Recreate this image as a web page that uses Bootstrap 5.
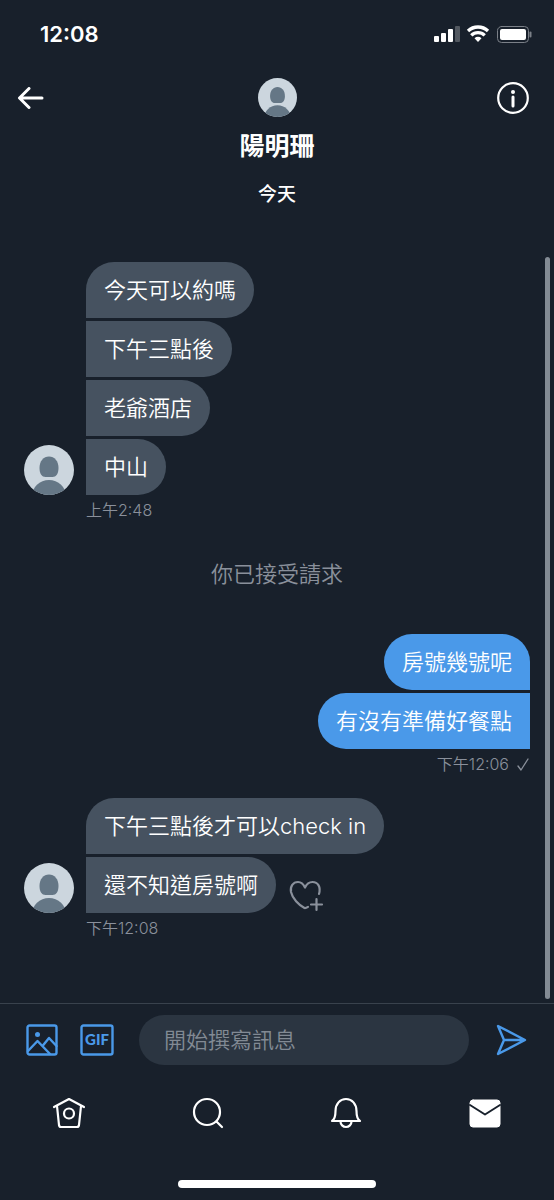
<!DOCTYPE html>
<html lang="zh-Hant">
<head>
<meta charset="utf-8">
<meta name="viewport" content="width=device-width, initial-scale=1">
<title>陽明珊</title>
<link href="https://cdn.jsdelivr.net/npm/bootstrap@5.3.0/dist/css/bootstrap.min.css" rel="stylesheet">
<style>
  :root { --ink: #18202b; --bubble: #465260; --brand: #4a99e9; --muted: #8a909b; --field: #2b3541; }
  body { background: var(--ink); color: #fff; font-family: Inter, "Noto Sans CJK TC", sans-serif; font-size: 22px; line-height: 32px; }
  svg { display: block; fill: none; stroke: currentColor; stroke-linecap: round; stroke-linejoin: round; }
  .icon-btn { background: none; border: 0; padding: 0; color: inherit; display: block; }
  .status { padding: 18px 22px 0 40px; font-weight: 600; }
  .top-grid { display: grid; grid-template-columns: 1fr auto 1fr; padding: 28px 17px 0; }
  .peer-name { font-size: 25px; font-weight: 700; line-height: 32px; margin-top: 13px; }
  .day { font-size: 19px; font-weight: 500; line-height: 28px; margin-top: 19px; }
  .thread { padding: 53px 24px 60px; font-weight: 350; }
  .msg-group { display: grid; grid-template-columns: 50px 1fr; column-gap: 12px; }
  .bubbles { display: flex; flex-direction: column; gap: 3px; align-items: flex-start; }
  .bubble { background: var(--bubble); padding: 12px 18px; border-radius: 0 28px 28px 0; }
  .bubble:first-child { border-top-left-radius: 28px; }
  .mine { align-items: flex-end; }
  .mine .bubble { background: var(--brand); border-radius: 28px 0 0 28px; }
  .mine .bubble:first-child { border-top-right-radius: 28px; }
  .stamp { color: var(--muted); font-size: 16px; line-height: 24px; margin-top: 3px; }
  .react { color: var(--muted); margin-left: 10px; }
  .note { color: var(--muted); margin: 36px 0 44px; }
  .after-mine { margin-top: 22px; }
  .scroll-thumb { position: absolute; right: 4px; top: 95px; bottom: 4px; width: 5px; border-radius: 3px; background: #838b94; }
  .composer { border-top: 1px solid #39424d; padding: 11px 27px 0 26px; color: var(--brand); }
  .composer .form-control { background: var(--field); border: 0; color: #fff; border-radius: 25px; height: 50px; padding: 0 25px; font-size: 22px; font-weight: 350; margin: 0 27px 0 25px; }
  .composer .form-control::placeholder { color: #828a94; opacity: 1; }
  .gif { margin-left: 22px; }
  .gif text { font: 900 15px Lato, sans-serif; }
  .tabs { padding-top: 32px; }
  .home-bar { width: 198px; height: 8px; border-radius: 4px; background: #fff; margin: 51px auto 12px; }
</style>
</head>
<body>
<svg width="0" height="0" class="position-absolute" aria-hidden="true">
  <symbol id="person" viewBox="0 0 50 50">
    <clipPath id="disc"><circle cx="25" cy="25" r="25"/></clipPath>
    <g clip-path="url(#disc)" stroke="none">
      <rect width="50" height="50" fill="#ccd6de"/>
      <path fill="#657786" d="M25 11.500c5.500 0 9.500 4.500 9.500 11.500 0 6-2.500 9-6 9h-7c-3.500 0-6-3-6-9 0-7 4-11.500 9.500-11.500z"/>
      <ellipse fill="#657786" cx="25" cy="51" rx="17" ry="16"/>
    </g>
  </symbol>
</svg>
<div class="d-flex flex-column min-vh-100">
  <header>
    <div class="status d-flex justify-content-between align-items-center">
      <span>12:08</span>
      <svg width="98" height="20" viewBox="0 0 98 20" aria-label="訊號、Wi-Fi、電池">
        <g fill="#fff" stroke="none">
          <rect x="0" y="12" width="5" height="6" rx="1"/><rect x="7" y="9" width="5" height="9" rx="1"/>
          <rect x="14" y="5" width="5" height="13" rx="1"/><rect x="21" y="2" width="5" height="16" rx="1" opacity=".25"/>
          <rect x="66" y="5" width="26" height="11" rx="2"/><path d="M40.500 14.200a5 5 0 0 1 7 0L44 18z"/>
        </g>
        <g stroke-width="3.300" stroke-linecap="butt"><path d="M34 7a14.500 14.500 0 0 1 20 0M37.300 11.300a9.500 9.500 0 0 1 13.400 0"/></g>
        <rect x="63.500" y="2.500" width="31" height="16" rx="4" stroke="#7b8088"/>
        <path d="M96.500 8.500v4" stroke="#7b8088" stroke-width="2"/>
      </svg>
    </div>
    <div class="top-grid align-items-center">
      <button class="icon-btn" aria-label="返回"><svg width="27" height="22" viewBox="0 0 27 22" stroke-width="3"><path d="M25 11H3M12 1.500 2.500 11 12 20.500"/></svg></button>
      <svg width="39" height="39"><use href="#person"/></svg>
      <button class="icon-btn ms-auto me-2" aria-label="資訊"><svg width="32" height="32" viewBox="0 0 32 32"><circle cx="16" cy="16" r="14.800" stroke-width="2.200"/><path d="M16 15v9" stroke-width="3"/><circle cx="16" cy="10" r="2" fill="#fff" stroke="none"/></svg></button>
    </div>
    <h1 class="peer-name text-center mb-0">陽明珊</h1>
  </header>
  <main class="position-relative flex-grow-1">
    <div class="day text-center">今天</div>
    <div class="thread">
      <section class="msg-group">
        <svg class="align-self-end" width="50" height="50"><use href="#person"/></svg>
        <div class="bubbles">
          <div class="bubble">今天可以約嗎</div>
          <div class="bubble">下午三點後</div>
          <div class="bubble">老爺酒店</div>
          <div class="bubble">中山</div>
        </div>
        <span></span><div class="stamp">上午2:48</div>
      </section>
      <p class="note text-center">你已接受請求</p>
      <section class="bubbles mine">
        <div class="bubble">房號幾號呢</div>
        <div class="bubble">有沒有準備好餐點</div>
      </section>
      <div class="stamp d-flex justify-content-end align-items-center gap-2">下午12:06 <svg width="13" height="13" viewBox="0 0 13 13" stroke-width="1.300"><path d="M1 8l3 4L11 1"/></svg></div>
      <section class="msg-group after-mine">
        <svg class="align-self-end" width="50" height="50"><use href="#person"/></svg>
        <div class="bubbles">
          <div class="bubble">下午三點後才可以check in</div>
          <div class="d-flex align-items-end">
            <div class="bubble rounded-start-0">還不知道房號啊</div>
            <button class="icon-btn react" aria-label="新增回應"><svg width="44" height="37" viewBox="0 0 44 37" stroke-width="2.200"><path d="M33 18c2-7-1-12-6.500-12-3.500 0-6 2.200-7.500 5.500C17.500 8.200 15.500 6 12 6 7 6 4 10.500 5 16c1.500 6.500 7.500 13 13.500 16 1 .3 2-.2 3.500-1.200M30.500 23v11M25 28.500h11"/></svg></button>
          </div>
        </div>
        <span></span><div class="stamp">下午12:08</div>
      </section>
    </div>
    <div class="scroll-thumb"></div>
  </main>
  <footer>
    <form class="composer d-flex align-items-center">
      <button type="button" class="icon-btn" aria-label="相片"><svg width="32" height="32" viewBox="0 0 32 32" stroke-width="2.400"><rect x="1.500" y="1.500" width="29" height="29" rx="2"/><path d="M2 27 11.500 17 24 30M16.500 22 23 14l7.500 8"/><circle cx="11.500" cy="10.500" r="2.500" fill="currentColor" stroke="none"/></svg></button>
      <button type="button" class="icon-btn gif" aria-label="GIF"><svg width="34" height="32" viewBox="0 0 34 32" stroke-width="2.400"><rect x="1.500" y="1.500" width="31" height="29" rx="2"/><text x="17" y="21" text-anchor="middle" fill="currentColor" stroke="none">GIF</text></svg></button>
      <input class="form-control flex-fill" type="text" placeholder="開始撰寫訊息" aria-label="開始撰寫訊息">
      <button type="button" class="icon-btn" aria-label="傳送"><svg width="31" height="32" viewBox="0 0 31 32" stroke-width="2.400"><path d="M2 2 29 16 2 30 8 16zM8 16h20"/></svg></button>
    </form>
    <nav class="tabs row g-0">
      <a class="col d-flex justify-content-center text-white" href="#" aria-label="首頁"><svg width="34" height="32" viewBox="0 0 34 32" stroke-width="2.200"><path d="M2 10 17 2l15 8M5 9l2 19c.2 1.200 1 2 2 2h16c1 0 1.800-.8 2-2l2-19"/><circle cx="17" cy="16.500" r="5"/></svg></a>
      <a class="col d-flex justify-content-center text-white" href="#" aria-label="搜尋"><svg width="32" height="32" viewBox="0 0 32 32" stroke-width="2.200"><circle cx="15" cy="15" r="13"/><path d="M24.500 24.500 30 30"/></svg></a>
      <a class="col d-flex justify-content-center text-white" href="#" aria-label="通知"><svg width="32" height="32" viewBox="0 0 32 32" stroke-width="2.200"><path d="M2 24c2.500-1.500 3.500-5 3.500-10C5.500 7 10 2 16 2s10.500 5 10.500 12c0 5 1 8.500 3.500 10zM10.500 24.500a5.500 5.500 0 0 0 11 0"/></svg></a>
      <a class="col d-flex justify-content-center text-white" href="#" aria-label="訊息"><svg width="32" height="32" viewBox="0 0 32 32" stroke="none"><rect x="1" y="3" width="30" height="27" rx="3" fill="#fff"/><path d="M1 8l15 9.500L31 8" stroke="#18202b" stroke-width="2"/></svg></a>
    </nav>
    <div class="home-bar"></div>
  </footer>
</div>
<script src="https://cdn.jsdelivr.net/npm/bootstrap@5.3.0/dist/js/bootstrap.bundle.min.js"></script>
</body>
</html>
